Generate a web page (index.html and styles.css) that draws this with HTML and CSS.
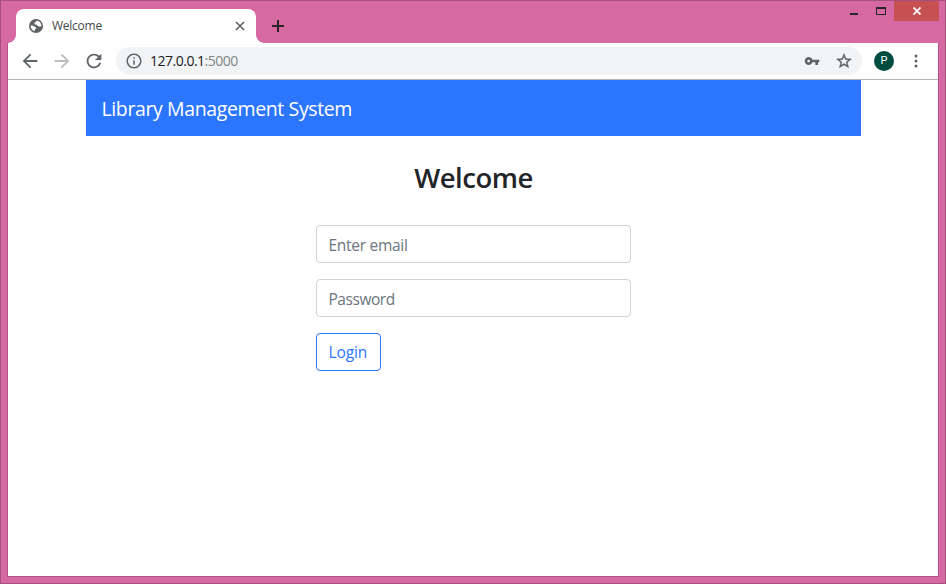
FILE: index.html
```html
<!DOCTYPE html>
<html lang="en">
<head>
<meta charset="utf-8">
<title>Welcome</title>
<link rel="stylesheet" href="styles.css">
</head>
<body>
<div class="window">
  <header class="titlebar">
    <div class="tab">
      <svg class="globe" viewBox="0 0 14 14"><circle cx="7" cy="7" r="7"/><path class="land" d="M8.700 1.800C7.300 2 5.700 3.200 5.400 4.400c-.200 1 1.300 1.300 2.600 1.300.500 1 .900 1.900 2.300 1.900.600 0 1.200-.400 2.100-.300C12.500 4.800 11.100 2.500 8.700 1.800zM1.600 6.600c1.200-.100 2.700-.100 3.500.700.600.700 1.900.500 2.200 1.400.200.900-1.200 1.200-1.500 2-.100.600-.100 1-.400 1.500C3.200 11.600 1.500 9.400 1.600 6.600z"/></svg>
      <span class="tab-title">Welcome</span>
      <svg class="tab-close" viewBox="0 0 10 10"><path d="M1 1l8 8M9 1L1 9"/></svg>
    </div>
    <svg class="new-tab" viewBox="0 0 12 12"><path d="M6 0v12M0 6h12"/></svg>
    <div class="window-controls">
      <span class="minimize"></span>
      <span class="maximize"></span>
      <span class="close"><svg viewBox="0 0 8 8"><path d="M.5.5l7 7M7.500.500l-7 7"/></svg></span>
    </div>
  </header>
  <div class="client">
    <div class="toolbar">
      <svg class="nav-icon" viewBox="0 0 24 24"><path d="M20 11H7.830l5.590-5.590L12 4l-8 8 8 8 1.410-1.410L7.830 13H20v-2z"/></svg>
      <svg class="nav-icon disabled" viewBox="0 0 24 24"><path d="M12 4l-1.410 1.410L16.170 11H4v2h12.170l-5.580 5.590L12 20l8-8z"/></svg>
      <svg class="nav-icon" viewBox="0 0 24 24"><path d="M17.650 6.350C16.200 4.900 14.210 4 12 4c-4.420 0-7.990 3.580-7.990 8s3.570 8 7.990 8c3.730 0 6.840-2.550 7.730-6h-2.080c-.820 2.330-3.040 4-5.650 4-3.310 0-6-2.690-6-6s2.690-6 6-6c1.660 0 3.140.690 4.220 1.780L13 11h7V4l-2.350 2.350z"/></svg>
      <div class="omnibox">
        <svg class="info" viewBox="0 0 24 24"><path d="M11 17h2v-6h-2v6zm1-15C6.480 2 2 6.480 2 12s4.480 10 10 10 10-4.480 10-10S17.520 2 12 2zm0 18c-4.410 0-8-3.590-8-8s3.590-8 8-8 8 3.590 8 8-3.590 8-8 8zM11 9h2V7h-2v2z"/></svg>
        <span class="url">127.0.0.1<span class="port">:5000</span></span>
        <svg class="key" viewBox="0 0 24 24"><path d="M12.650 10C11.830 7.670 9.610 6 7 6c-3.310 0-6 2.690-6 6s2.690 6 6 6c2.610 0 4.830-1.670 5.650-4H17v4h4v-4h2v-4H12.650zM7 14c-1.100 0-2-.900-2-2s.900-2 2-2 2 .900 2 2-.900 2-2 2z"/></svg>
        <svg class="star" viewBox="0 0 24 24"><path d="M22 9.240l-7.190-.620L12 2 9.190 8.630 2 9.240l5.460 4.730L5.820 21 12 17.270 18.180 21l-1.630-7.030L22 9.240zM12 15.400l-3.760 2.270 1-4.280-3.320-2.880 4.380-.380L12 6.100l1.710 4.040 4.380.380-3.320 2.880 1 4.280L12 15.400z"/></svg>
      </div>
      <span class="avatar">P</span>
      <svg class="menu" viewBox="0 0 4 14"><circle cx="2" cy="2" r="1.500"/><circle cx="2" cy="7" r="1.500"/><circle cx="2" cy="12" r="1.500"/></svg>
    </div>
    <main class="container">
      <nav class="navbar"><span class="brand">Library Management System</span></nav>
      <form class="login">
        <h1>Welcome</h1>
        <input class="email" type="email" placeholder="Enter email">
        <input class="password" type="password" placeholder="Password">
        <button type="button"><span>Login</span></button>
      </form>
    </main>
  </div>
</div>
</body>
</html>
```

FILE: styles.css
```css
* { box-sizing: border-box; }
body { margin: 0; font-family: "Open Sans", "Noto Sans", sans-serif; }
svg { display: block; flex: none; fill: #5f6368; }
.window {
  width: 946px; height: 584px; overflow: hidden;
  border: 1px solid #a5507d; background: #d668a2;
  padding: 0 6px 6px;
}
.titlebar { height: 42px; display: flex; align-items: flex-start; }
.tab {
  position: relative; width: 240px; height: 34px; margin: 8px 0 0 9px;
  padding: 0 11px 0 13px; display: flex; align-items: center;
  background: #fff; border-radius: 8px 8px 0 0;
}
.tab::before, .tab::after {
  content: ""; position: absolute; bottom: 0; width: 8px; height: 8px;
}
.tab::before { left: -8px; background: radial-gradient(circle at 0 0, transparent 7.500px, #fff 8px); }
.tab::after { right: -8px; background: radial-gradient(circle at 100% 0, transparent 7.500px, #fff 8px); }
.globe { width: 14px; height: 14px; }
.globe .land { fill: #fff; }
.tab-title { flex: 1; margin-left: 9px; font-size: 12px; line-height: 16px; color: #45494d; letter-spacing: -.25px; }
.tab-close { width: 10px; height: 10px; stroke: #5f6368; stroke-width: 1.700; }
.new-tab { width: 12px; height: 12px; margin: 19px 0 0 16px; stroke: #2b2127; stroke-width: 2; }
.window-controls { display: flex; margin-left: auto; }
.minimize { width: 8px; height: 2px; margin: 12px 18px 0 0; background: #252525; }
.maximize { width: 10px; height: 8px; margin: 6px 8px 0 0; border: 1px solid #252525; border-top-width: 2px; }
.close { width: 45px; height: 20px; display: grid; place-items: center; background: #c75050; }
.close svg { width: 8px; height: 8px; stroke: #fff; stroke-width: 1.800; }
.client { height: 534px; border: solid #b3528a; border-width: 0 1px 1px; background: #fff; }
.toolbar {
  height: 37px; padding: 0 20px 0 11px; display: flex; align-items: center;
  border-bottom: 1px solid #b5b4b6;
}
.nav-icon { width: 22px; height: 22px; margin-right: 10px; }
.nav-icon.disabled { fill: #babcbe; }
.omnibox {
  width: 746px; height: 28px; margin-left: 1px; padding: 0 9px; display: flex; align-items: center;
  background: #f1f3f4; border-radius: 14px;
}
.info { width: 18px; height: 18px; }
.url { flex: 1; margin-left: 7px; font-size: 14px; line-height: 20px; color: #202124; letter-spacing: -.5px; }
.port { color: #80868b; }
.key { width: 16px; height: 16px; margin-right: 15px; }
.star { width: 18px; height: 18px; stroke: #5f6368; stroke-width: .5; }
.avatar {
  width: 20px; height: 20px; margin-left: 12px; border-radius: 50%;
  background: #004d40; color: #fff; font: 11px/20px Roboto, sans-serif; text-align: center;
}
.menu { width: 4px; height: 14px; margin-left: auto; }
.container { width: 775px; margin-left: 78px; }
.navbar { height: 56px; padding: 14px 15.500px; background: #2c76ff; }
.brand { display: block; font-size: 19.500px; line-height: 30px; color: #fff; letter-spacing: -.38px; }
.login { width: 315px; margin: 25px auto 0; display: flex; flex-direction: column; align-items: flex-start; }
h1 { width: 100%; margin: 0 0 30px; font-size: 27.500px; line-height: 34px; font-weight: 600; color: #212529; text-align: center; letter-spacing: -.5px; }
input {
  width: 100%; height: 38px; margin: 0 0 16px; padding: 1px 12px 0 11.500px;
  border: 1px solid #ced4da; border-radius: 4px; background: #fff; color: #495057;
  font: 15.500px/24px "Open Sans", "Noto Sans", sans-serif; letter-spacing: -.28px;
}
.password { letter-spacing: -.45px; }
input::placeholder { color: #6c757d; opacity: 1; }
button {
  width: 65px; height: 38px; padding: 0 11.500px; border: 1px solid #2c76ff; border-radius: 4px;
  background: #fff; color: #2c76ff; text-align: left; white-space: nowrap;
  font: 15.500px/24px "Open Sans", "Noto Sans", sans-serif; letter-spacing: -.1px;
}
```
